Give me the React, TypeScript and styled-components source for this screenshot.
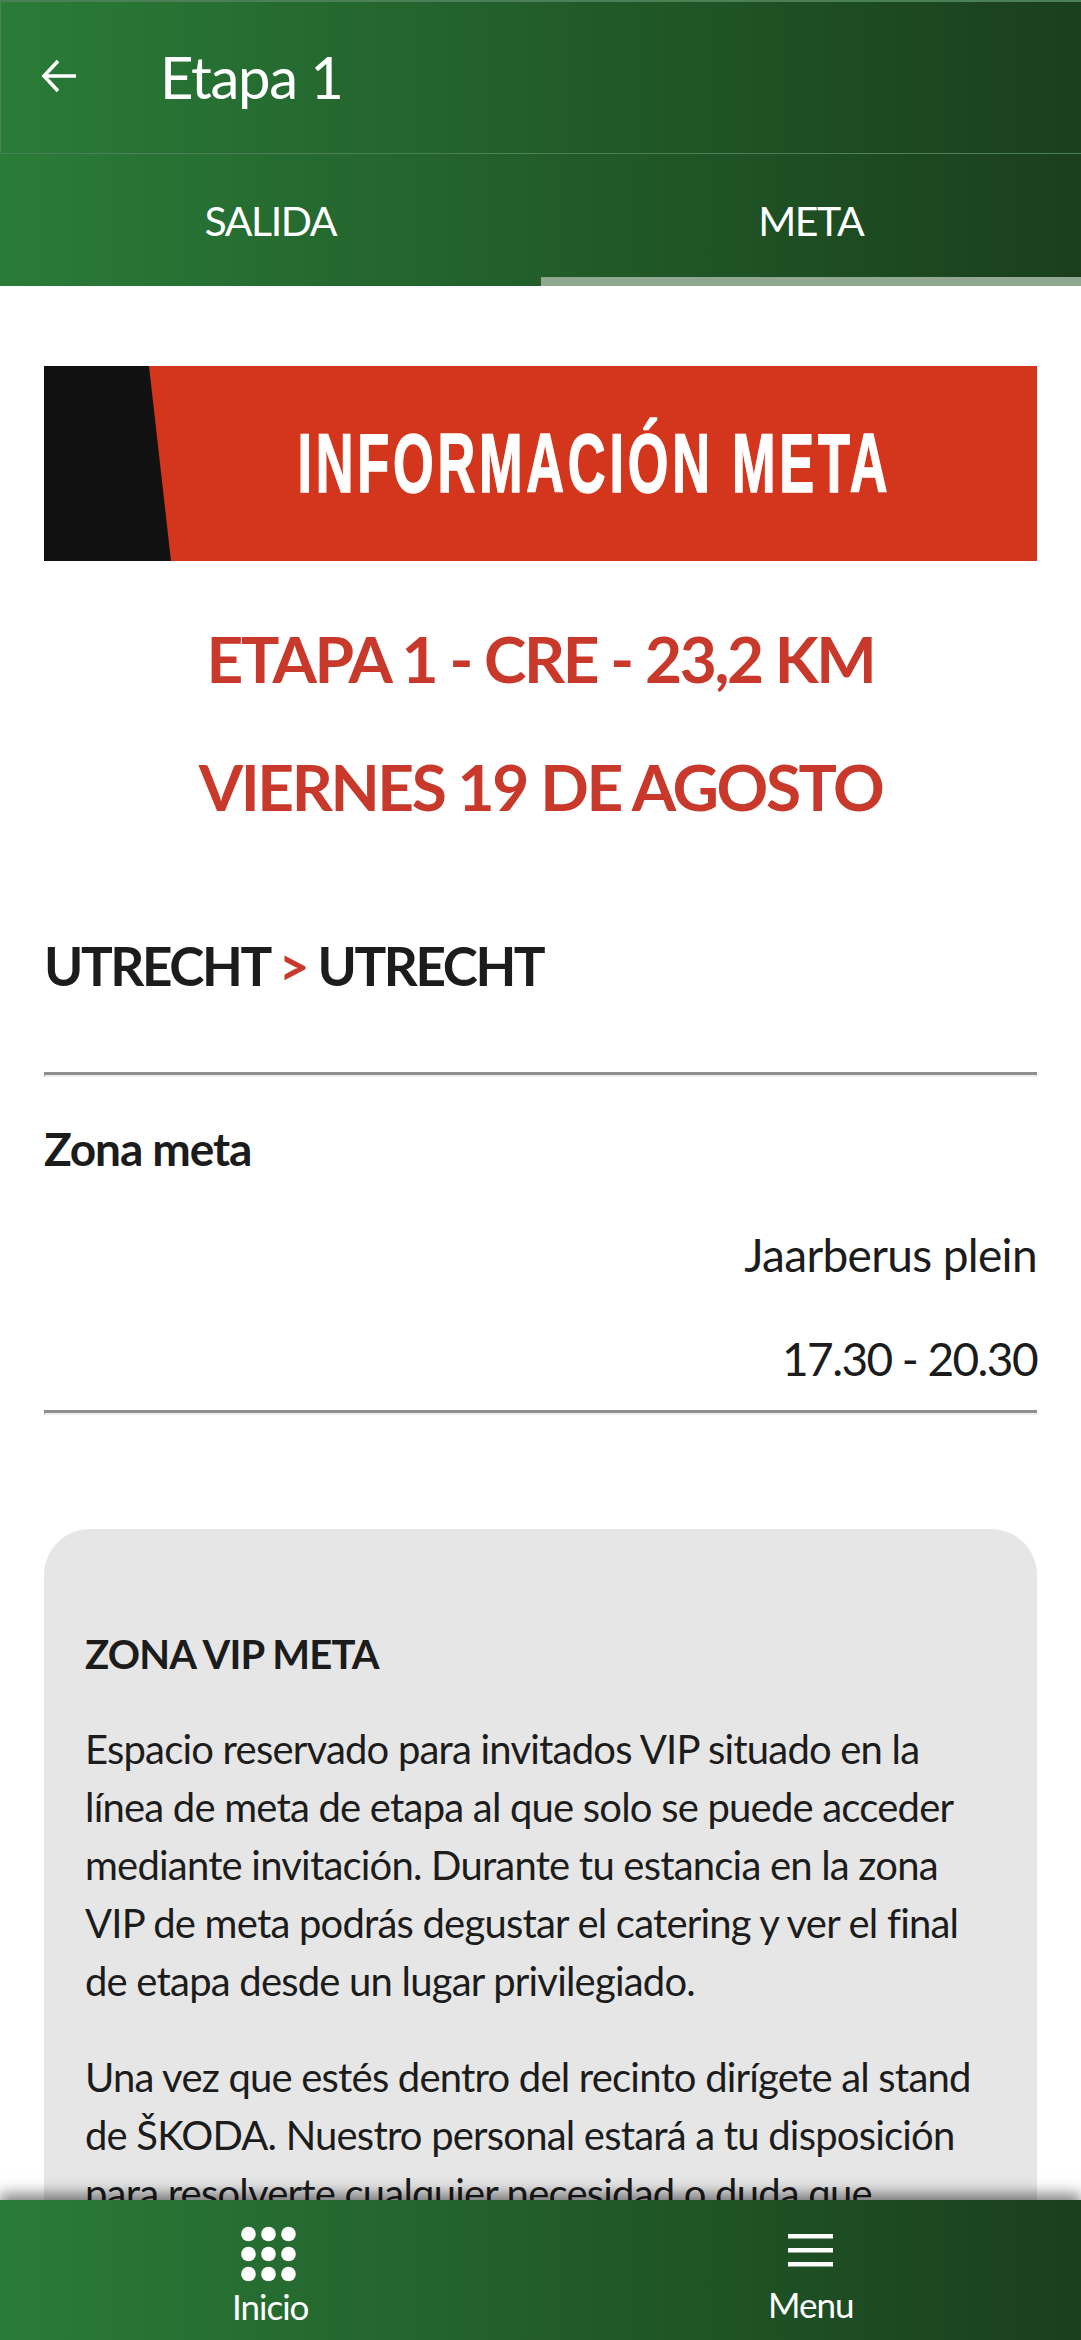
import React from "react";
import styled, { createGlobalStyle } from "styled-components";

const Global = createGlobalStyle`
  html, body { margin: 0; padding: 0; height: 100%; background: #fff; overflow: hidden; }
  #root { height: 100%; }
  * { box-sizing: border-box; }
`;

const GREEN = "linear-gradient(90deg, #2a7b38 0%, #1a3f1c 100%)";

const Screen = styled.div`
  height: 2340px;
  display: flex;
  flex-direction: column;
  font-family: Lato, "Noto Sans", sans-serif;
  color: #1c1c1c;
`;
const TopBar = styled.header`
  height: 154px;
  flex: none;
  background: ${GREEN};
  border-top: 2px solid #4b7f55;
  border-left: 1px solid #4b7f55;
  border-bottom: 1px solid #4b7f55;
  display: flex;
  align-items: center;
  padding: 0 0 0 40px;
  color: #fff;
`;
const Back = styled.svg`
  width: 36px;
  height: 36px;
  flex: none;
  margin: -3px 0 0 0;
`;
const Title = styled.h1`
  margin: -2px 0 0 83px;
  font-size: 58px;
  font-weight: 400;
  line-height: 1;
  letter-spacing: -1.3px;
`;
const Tabs = styled.nav`
  height: 132px;
  flex: none;
  background: ${GREEN};
  display: flex;
`;
const Tab = styled.div<{ $active?: boolean }>`
  flex: 1;
  display: flex;
  align-items: center;
  justify-content: center;
  color: #fff;
  font-size: 41px;
  letter-spacing: -1.4px;
  padding-top: 9px;
  border-bottom: 9px solid ${(p) => (p.$active ? "#8fa88f" : "transparent")};
`;
const Scroll = styled.main`
  flex: 1;
  min-height: 0;
  overflow: hidden;
  padding: 80px 44px 0;
`;
const Banner = styled.div`
  height: 195px;
  background: #d3361c;
  position: relative;
  display: flex;
  align-items: center;
  justify-content: center;
  padding-left: 108px;
`;
const BannerWedge = styled.div`
  position: absolute;
  left: 0;
  top: 0;
  bottom: 0;
  width: 127px;
  background: #111;
  clip-path: polygon(0 0, 105px 0, 127px 100%, 0 100%);
`;
const BannerText = styled.h2`
  margin: 0;
  color: #fff;
  font-family: "Liberation Sans", sans-serif;
  font-weight: 700;
  font-size: 83px;
  line-height: 1;
  white-space: nowrap;
  letter-spacing: 6px;
  -webkit-text-stroke: 1.5px #fff;
  transform: scaleX(0.63);
`;
const RedLine = styled.p`
  margin: 0;
  text-align: center;
  color: #c8392b;
  font-size: 64px;
  font-weight: 700;
  line-height: 72px;
  letter-spacing: -2.4px;
  padding-top: 62px;
`;
const RedLineNext = styled(RedLine)`
  padding-top: 56px;
`;
const Route = styled.h3`
  margin: 112px 0 0;
  font-size: 53px;
  font-weight: 700;
  line-height: 62px;
  letter-spacing: -2.4px;
`;
const Arrow = styled.span`
  color: #c8392b;
`;
const Rule = styled.hr<{ $top: number }>`
  margin: ${(p) => p.$top}px 0 0;
  height: 5px;
  border: 0;
  border-top: 3px solid #8f8f8f;
  border-bottom: 2px solid #eeeeee;
  border-left: 1px solid #8f8f8f;
`;
const Label = styled.h4`
  margin: 47px 0 0;
  font-size: 46px;
  font-weight: 700;
  line-height: 50px;
  letter-spacing: -1.1px;
`;
const Value = styled.p<{ $top: number; $tight?: boolean }>`
  margin: ${(p) => p.$top}px 0 0;
  text-align: right;
  font-size: 46px;
  line-height: 50px;
  letter-spacing: ${(p) => (p.$tight ? "-1.6px" : "-0.66px")};
`;
const Card = styled.section`
  margin-top: 114px;
  background: #e6e6e6;
  border-radius: 46px;
  padding: 97px 41px 60px;
`;
const CardTitle = styled.h5`
  margin: 0 0 3px;
  font-size: 40px;
  font-weight: 700;
  line-height: 56px;
  letter-spacing: -0.8px;
`;
const CardText = styled.p`
  margin: 38px 0 0;
  font-size: 40px;
  line-height: 58px;
  letter-spacing: -0.8px;
`;
const BottomBar = styled.footer`
  height: 140px;
  flex: none;
  position: relative;
  background: ${GREEN};
  box-shadow: 0 -6px 14px rgba(0, 0, 0, 0.5);
  display: flex;
  color: #fff;
`;
const NavItem = styled.div`
  flex: 1;
  display: flex;
  flex-direction: column;
  align-items: center;
`;
const NavIcon = styled.svg`
  flex: none;
  margin-top: 26px;
  width: 60px;
  height: 56px;
`;
const NavLabel = styled.span<{ $top: number }>`
  font-size: 35px;
  line-height: 40px;
  letter-spacing: -1px;
  margin-top: ${(p) => p.$top}px;
`;

export default function App() {
  return (
    <Screen>
      <Global />
      <TopBar>
        <Back viewBox="0 0 36 36" fill="none" stroke="#fff" strokeWidth="3.6">
          <path d="M35 18H3M17 3 3 18l14 15" />
        </Back>
        <Title>Etapa 1</Title>
      </TopBar>
      <Tabs>
        <Tab>SALIDA</Tab>
        <Tab $active>META</Tab>
      </Tabs>
      <Scroll>
        <Banner>
          <BannerWedge />
          <BannerText>INFORMACIÓN META</BannerText>
        </Banner>
        <RedLine>ETAPA 1 - CRE - 23,2 KM</RedLine>
        <RedLineNext>VIERNES 19 DE AGOSTO</RedLineNext>
        <Route>
          UTRECHT <Arrow>&gt;</Arrow> UTRECHT
        </Route>
        <Rule $top={75} />
        <Label>Zona meta</Label>
        <Value $top={56}>Jaarberus plein</Value>
        <Value $top={54} $tight>
          17.30 - 20.30
        </Value>
        <Rule $top={26} />
        <Card>
          <CardTitle>ZONA VIP META</CardTitle>
          <CardText>
            Espacio reservado para invitados VIP situado en la línea de meta de etapa al que solo se puede acceder
            mediante invitación. Durante tu estancia en la zona VIP de meta podrás degustar el catering y ver el final
            de etapa desde un lugar privilegiado.
          </CardText>
          <CardText>
            Una vez que estés dentro del recinto dirígete al stand de ŠKODA. Nuestro personal estará a tu disposición
            para resolverte cualquier necesidad o duda que
            <br />
            pueda surgirte durante tu visita.
          </CardText>
        </Card>
      </Scroll>
      <BottomBar>
        <NavItem>
          <NavIcon viewBox="0 0 60 56" fill="#fff">
            {[8, 28, 48].map((cy) =>
              [8.5, 28.5, 48.5].map((cx) => <circle key={`${cx}-${cy}`} cx={cx} cy={cy} r="7.3" />)
            )}
          </NavIcon>
          <NavLabel $top={4}>Inicio</NavLabel>
        </NavItem>
        <NavItem>
          <NavIcon viewBox="0 0 60 56" fill="#fff">
            <rect x="7" y="8" width="45" height="4.5" />
            <rect x="7" y="22" width="45" height="4.5" />
            <rect x="7" y="36" width="45" height="4.5" />
          </NavIcon>
          <NavLabel $top={2}>Menu</NavLabel>
        </NavItem>
      </BottomBar>
    </Screen>
  );
}
